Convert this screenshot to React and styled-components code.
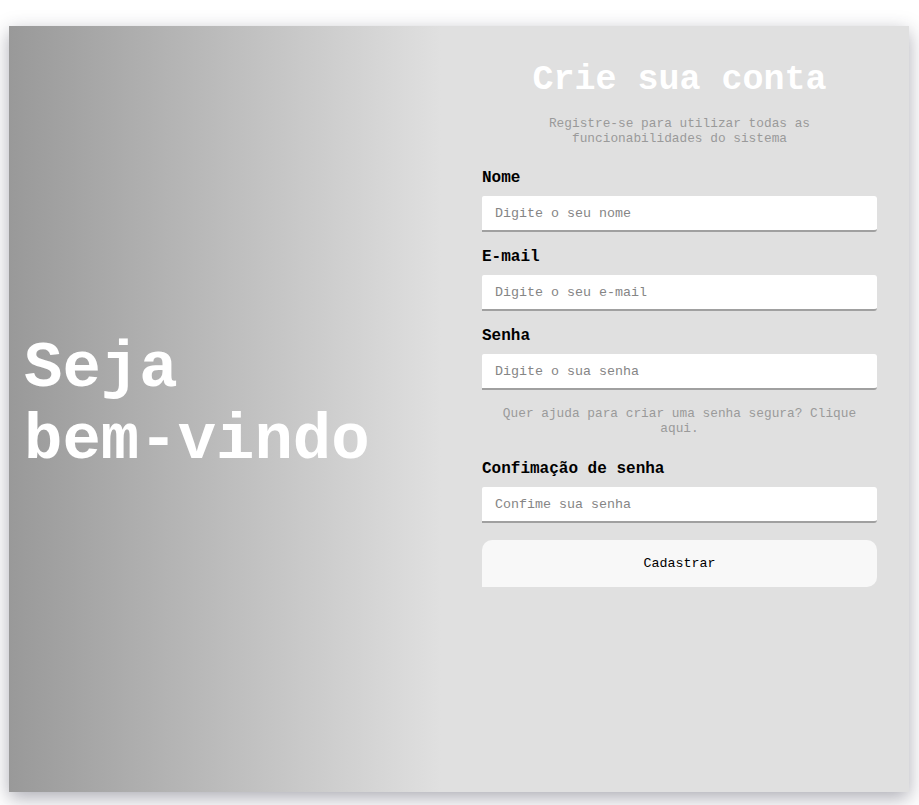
import React from "react";
import styled, { createGlobalStyle } from "styled-components";

const GlobalStyle = createGlobalStyle`
  body {
    margin: 0;
    background: #ffffff;
    font-family: "Liberation Mono", "Courier New", monospace;
  }
`;

const Page = styled.div`
  padding: 26px 10px 13px 9px;
`;

const Card = styled.main`
  display: grid;
  grid-template-columns: 450px 450px;
  width: 900px;
  height: 766px;
  background: #e0e0e0;
  box-shadow: 0 6px 18px rgba(40, 40, 60, 0.38);
`;

const Welcome = styled.section`
  display: flex;
  align-items: center;
  padding: 0 15px;
  background: linear-gradient(to right, #999999 0%, #e0e0e0 96%);
`;

const WelcomeTitle = styled.h1`
  margin: 0 0 8px;
  font-size: 64px;
  line-height: 72px;
  font-weight: bold;
  color: #ffffff;
`;

const Word = styled.span`
  white-space: nowrap;
`;

const FormSide = styled.section`
  display: flex;
  flex-direction: column;
  padding: 34px 32px 0 23px;
`;

const Title = styled.h2`
  margin: 0;
  font-size: 35px;
  line-height: 40px;
  font-weight: bold;
  color: #ffffff;
  text-align: center;
`;

const Note = styled.p`
  margin: ${(p) => p.$top}px 0 0;
  font-size: 12.8px;
  line-height: 15px;
  color: #9a9a9a;
  text-align: center;
`;

const Form = styled.form`
  display: flex;
  flex-direction: column;
`;

const Label = styled.label`
  margin-top: ${(p) => p.$top}px;
  font-size: 16px;
  line-height: 18px;
  font-weight: bold;
  color: #000000;
`;

const Input = styled.input`
  box-sizing: border-box;
  height: 36px;
  margin-top: 9px;
  padding: 0 13px;
  border: none;
  border-bottom: 2px solid #a0a0a0;
  border-radius: 2px 3px 3px 0;
  background: #ffffff;
  font-family: "Liberation Mono", "Courier New", monospace;
  font-size: 13.33px;
  outline: none;

  &::placeholder {
    color: #858585;
  }
`;

const Button = styled.button`
  height: 47px;
  margin-top: 17px;
  border: none;
  border-radius: 10px 10px 10px 0;
  background: #f8f8f8;
  font-family: "Liberation Mono", "Courier New", monospace;
  font-size: 13.33px;
  color: #000000;
  cursor: pointer;
`;

const fields = [
  { id: "nome", label: "Nome", placeholder: "Digite o seu nome", top: 23 },
  { id: "email", label: "E-mail", placeholder: "Digite o seu e-mail", top: 16 },
  { id: "senha", label: "Senha", placeholder: "Digite o sua senha", top: 16, type: "password" },
];

const App = () => (
  <>
    <GlobalStyle />
    <Page>
      <Card>
        <Welcome>
          <WelcomeTitle>
            <Word>Seja</Word> <Word>bem-vindo</Word>
          </WelcomeTitle>
        </Welcome>
        <FormSide>
          <Title>Crie sua conta</Title>
          <Note $top={16}>
            Registre-se para utilizar todas as funcionabilidades do sistema
          </Note>
          <Form onSubmit={(e) => e.preventDefault()}>
            {fields.map((f) => (
              <React.Fragment key={f.id}>
                <Label htmlFor={f.id} $top={f.top}>{f.label}</Label>
                <Input id={f.id} type={f.type || "text"} placeholder={f.placeholder} />
              </React.Fragment>
            ))}
            <Note $top={16}>Quer ajuda para criar uma senha segura? Clique aqui.</Note>
            <Label htmlFor="confirma" $top={24}>Confimação de senha</Label>
            <Input id="confirma" type="password" placeholder="Confime sua senha" />
            <Button type="submit">Cadastrar</Button>
          </Form>
        </FormSide>
      </Card>
    </Page>
  </>
);

export default App;
